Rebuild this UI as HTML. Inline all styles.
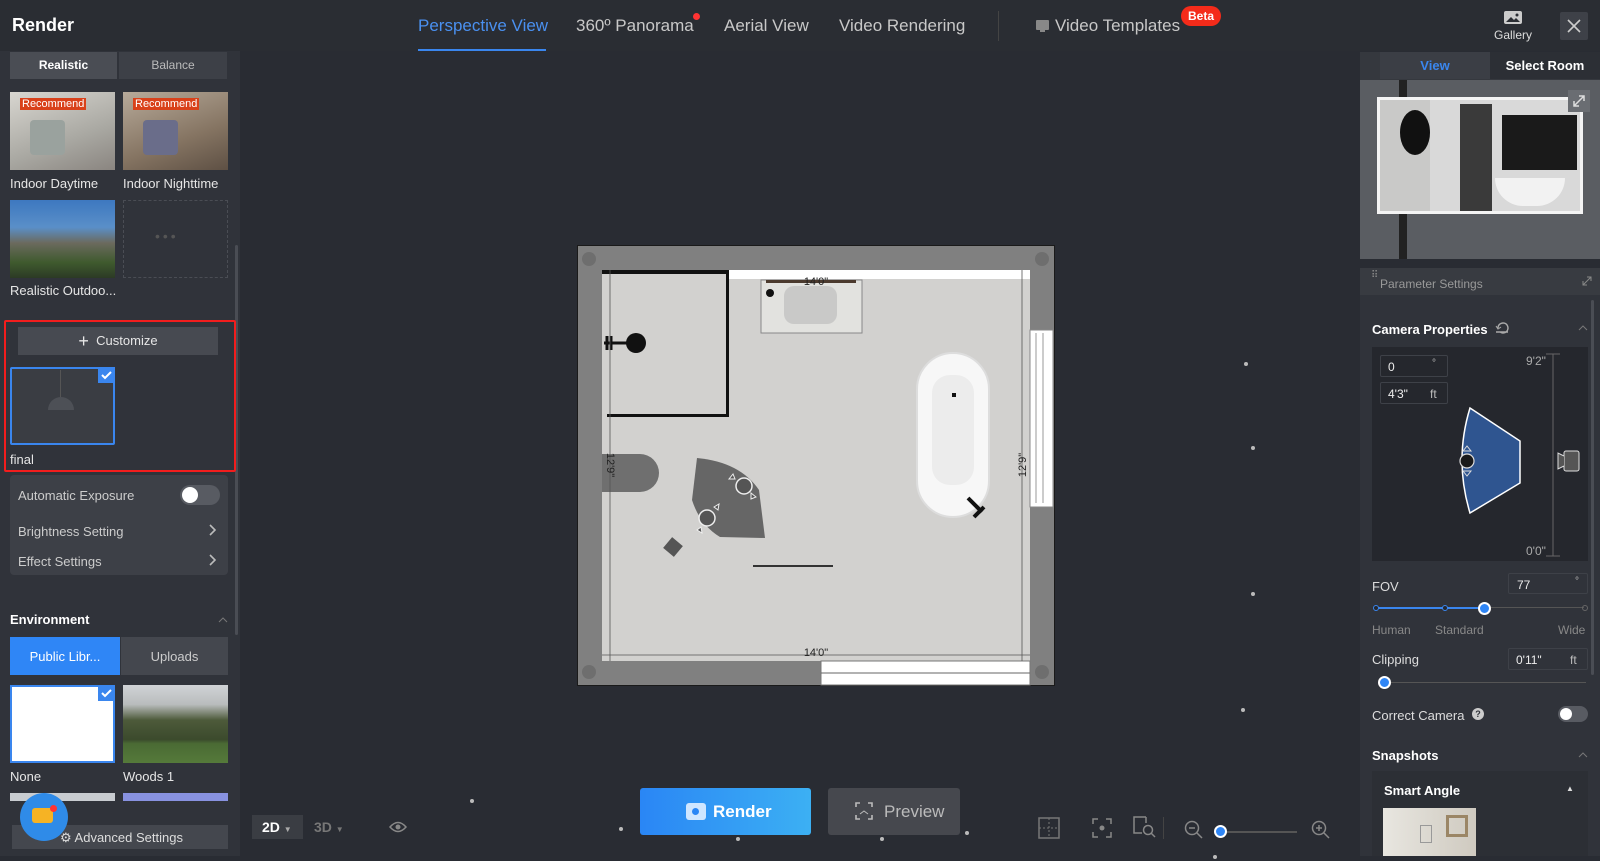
<!DOCTYPE html>
<html><head><meta charset="utf-8"><style>
*{box-sizing:border-box;margin:0;padding:0}
body{width:1600px;height:861px;overflow:hidden;background:#292c33;font-family:"Liberation Sans",sans-serif;color:#ddd;position:relative}
.a{position:absolute}
.t{position:absolute;white-space:nowrap}
.dot{position:absolute;width:4px;height:4px;border-radius:2px;background:#bbb}
</style></head><body>
<!-- top bar -->
<div class="a" style="left:0;top:0;width:1600px;height:51px;background:#2a2d33"></div>
<div class="t" style="left:12px;top:15px;font-size:18px;font-weight:bold;color:#fff">Render</div>
<div class="t" style="left:418px;top:16px;font-size:17px;color:#4a90f0">Perspective View</div>
<div class="a" style="left:418px;top:49px;width:128px;height:2px;background:#3a86ee"></div>
<div class="t" style="left:576px;top:16px;font-size:17px;color:#c8c8c8">360º Panorama</div>
<div class="a" style="left:693px;top:13px;width:7px;height:7px;border-radius:4px;background:#f33"></div>
<div class="t" style="left:724px;top:16px;font-size:17px;color:#c8c8c8">Aerial View</div>
<div class="t" style="left:839px;top:16px;font-size:17px;color:#c8c8c8">Video Rendering</div>
<div class="a" style="left:998px;top:11px;width:1px;height:30px;background:#444"></div>
<div class="a" style="left:1036px;top:20px;width:13px;height:10px;background:#888;border-radius:1px"></div>
<div class="a" style="left:1040px;top:30px;width:5px;height:2px;background:#888"></div>
<div class="t" style="left:1055px;top:16px;font-size:17px;color:#c8c8c8">Video Templates</div>
<div class="t" style="left:1181px;top:6px;width:40px;height:20px;border-radius:10px;background:#f42b1a;color:#fff;font-size:12px;font-weight:bold;text-align:center;line-height:20px">Beta</div>
<svg class="a" style="left:1503px;top:9px" width="20" height="16" viewBox="0 0 20 16"><rect x="1" y="2" width="18" height="13" rx="2" fill="#ccc"/><path d="M3 13l5-5 3 3 2-2 4 4z" fill="#2a2d33"/><circle cx="14" cy="6" r="1.5" fill="#2a2d33"/></svg>
<div class="t" style="left:1494px;top:28px;font-size:12px;color:#ddd">Gallery</div>
<div class="a" style="left:1560px;top:12px;width:28px;height:28px;background:#3e4148;border-radius:2px"></div>
<svg class="a" style="left:1566px;top:18px" width="16" height="16"><path d="M2 2L14 14M14 2L2 14" stroke="#ccc" stroke-width="1.6"/></svg>

<!-- left panel -->
<div class="a" style="left:0;top:51px;width:240px;height:805px;background:#30333a"></div>
<div class="a" style="left:10px;top:52px;width:107px;height:27px;background:#4a4d54"></div>
<div class="t" style="left:10px;top:58px;width:107px;text-align:center;font-size:12px;font-weight:bold;color:#fff">Realistic</div>
<div class="a" style="left:119px;top:52px;width:108px;height:27px;background:#3d4047"></div>
<div class="t" style="left:119px;top:58px;width:108px;text-align:center;font-size:12px;color:#bbb">Balance</div>
<div class="a" style="left:10px;top:92px;width:105px;height:78px;background:linear-gradient(160deg,#d8d6d0,#a9a8a2 60%,#8a8580)"></div>
<div class="a" style="left:30px;top:120px;width:35px;height:35px;background:#9aa29e;border-radius:4px"></div>
<div class="t" style="left:20px;top:98px;background:#d9411a;color:#fff;font-size:11px;padding:0 2px">Recommend</div>
<div class="a" style="left:123px;top:92px;width:105px;height:78px;background:linear-gradient(160deg,#b7aa9a,#857462 60%,#5e5044)"></div>
<div class="a" style="left:143px;top:120px;width:35px;height:35px;background:#6a6d8a;border-radius:4px"></div>
<div class="t" style="left:133px;top:98px;background:#d9411a;color:#fff;font-size:11px;padding:0 2px">Recommend</div>
<div class="t" style="left:10px;top:176px;font-size:13px;color:#e6e6e6">Indoor Daytime</div>
<div class="t" style="left:123px;top:176px;font-size:13px;color:#e6e6e6">Indoor Nighttime</div>
<div class="a" style="left:10px;top:200px;width:105px;height:78px;background:linear-gradient(180deg,#3d78c0 0%,#5a8fc8 35%,#6b6a5e 55%,#3f5a2e 80%,#2c3a25)"></div>
<div class="a" style="left:123px;top:200px;width:105px;height:78px;border:1px dashed #4a4d54"></div>
<div class="t" style="left:155px;top:228px;font-size:14px;color:#555;letter-spacing:3px">•••</div>
<div class="t" style="left:10px;top:283px;font-size:13px;color:#e6e6e6">Realistic Outdoo...</div>
<div class="a" style="left:235px;top:245px;width:3px;height:390px;background:#4a4d54;border-radius:2px"></div>
<div class="a" style="left:4px;top:320px;width:232px;height:152px;border:2px solid #f21d1d;border-radius:2px"></div>
<div class="a" style="left:18px;top:327px;width:200px;height:28px;background:#474a51"></div>
<div class="t" style="left:18px;top:333px;width:200px;text-align:center;font-size:13px;color:#e6e6e6"><span style="font-size:18px;line-height:12px;vertical-align:-2px">+</span>&nbsp; Customize</div>
<div class="a" style="left:10px;top:367px;width:105px;height:78px;background:#3a3d43;border:2px solid #3a86ee;border-radius:2px"></div>
<div class="a" style="left:60px;top:370px;width:1px;height:30px;background:#555"></div>
<div class="a" style="left:48px;top:397px;width:26px;height:13px;border-radius:13px 13px 0 0;background:#4d5056"></div>
<div class="a" style="left:98px;top:367px;width:17px;height:16px;background:#3a86ee"></div>
<svg class="a" style="left:100px;top:369px" width="13" height="12"><path d="M2 6l3 3 6-6" stroke="#fff" stroke-width="2" fill="none"/></svg>
<div class="t" style="left:10px;top:452px;font-size:13px;color:#e6e6e6">final</div>
<div class="a" style="left:10px;top:475px;width:218px;height:100px;background:#3d4047;border-radius:4px"></div>
<div class="t" style="left:18px;top:488px;font-size:13px;color:#ccc">Automatic Exposure</div>
<div class="a" style="left:180px;top:485px;width:40px;height:20px;border-radius:10px;background:#585b62"></div>
<div class="a" style="left:182px;top:487px;width:16px;height:16px;border-radius:8px;background:#fff"></div>
<div class="t" style="left:18px;top:524px;font-size:13px;color:#ccc">Brightness Setting</div>
<div class="t" style="left:18px;top:554px;font-size:13px;color:#ccc">Effect Settings</div>
<svg class="a" style="left:208px;top:524px" width="10" height="44"><path d="M2 1l5 5-5 5M2 31l5 5-5 5" stroke="#bbb" stroke-width="1.6" fill="none"/></svg>
<div class="t" style="left:10px;top:612px;font-size:13px;font-weight:bold;color:#fff">Environment</div>
<svg class="a" style="left:218px;top:617px" width="10" height="6"><path d="M1 5l4-4 4 4" stroke="#777" fill="none"/></svg>
<div class="a" style="left:10px;top:637px;width:110px;height:38px;background:#2f86f6"></div>
<div class="t" style="left:10px;top:649px;width:110px;text-align:center;font-size:13px;color:#fff">Public Libr...</div>
<div class="a" style="left:121px;top:637px;width:107px;height:38px;background:#44474e"></div>
<div class="t" style="left:121px;top:649px;width:107px;text-align:center;font-size:13px;color:#ccc">Uploads</div>
<div class="a" style="left:10px;top:685px;width:105px;height:78px;background:#fff;border:2px solid #3a86ee"></div>
<div class="a" style="left:98px;top:685px;width:17px;height:16px;background:#3a86ee"></div>
<svg class="a" style="left:100px;top:687px" width="13" height="12"><path d="M2 6l3 3 6-6" stroke="#fff" stroke-width="2" fill="none"/></svg>
<div class="a" style="left:123px;top:685px;width:105px;height:78px;background:linear-gradient(180deg,#d0d3d6 0%,#b9bcbd 25%,#4d5a3a 45%,#3b4a2c 70%,#4a6a34 75%,#557a3a)"></div>
<div class="t" style="left:10px;top:769px;font-size:13px;color:#e6e6e6">None</div>
<div class="t" style="left:123px;top:769px;font-size:13px;color:#e6e6e6">Woods 1</div>
<div class="a" style="left:10px;top:793px;width:105px;height:8px;background:#c8ccd0"></div>
<div class="a" style="left:123px;top:793px;width:105px;height:8px;background:#8892e0"></div>
<div class="a" style="left:12px;top:825px;width:216px;height:24px;background:#44474e"></div>
<div class="t" style="left:60px;top:830px;font-size:13px;color:#ddd">⚙ Advanced Settings</div>
<div class="a" style="left:20px;top:793px;width:48px;height:48px;border-radius:24px;background:#2f8be8"></div>
<div class="a" style="left:32px;top:808px;width:21px;height:15px;background:#f6b324;border-radius:3px"></div>
<div class="a" style="left:50px;top:805px;width:7px;height:7px;border-radius:4px;background:#f33"></div>

<!-- canvas bottom controls -->
<div class="a" style="left:252px;top:815px;width:51px;height:24px;background:#3a3d43"></div>
<div class="t" style="left:262px;top:819px;font-size:14px;font-weight:bold;color:#fff">2D <span style="font-size:8px;color:#aaa">▼</span></div>
<div class="t" style="left:314px;top:819px;font-size:14px;font-weight:bold;color:#777">3D <span style="font-size:8px">▼</span></div>
<svg class="a" style="left:389px;top:820px" width="18" height="14"><path d="M1 7Q9-2 17 7Q9 16 1 7z" fill="none" stroke="#888" stroke-width="1.5"/><circle cx="9" cy="7" r="2.5" fill="#888"/></svg>
<div class="a" style="left:640px;top:788px;width:171px;height:47px;border-radius:3px;background:linear-gradient(90deg,#2a86f5,#3cb0f3)"></div>
<div class="a" style="left:686px;top:803px;width:20px;height:17px;border-radius:3px;background:#cfe6ff"></div>
<div class="a" style="left:692px;top:808px;width:7px;height:7px;border-radius:4px;background:#2a86f5"></div>
<div class="t" style="left:713px;top:802px;font-size:17px;font-weight:bold;color:#fff">Render</div>
<div class="a" style="left:828px;top:788px;width:132px;height:47px;border-radius:3px;background:#46484e"></div>
<svg class="a" style="left:855px;top:802px" width="18" height="18"><path d="M1 5V1h4M13 1h4v4M17 13v4h-4M5 17H1v-4" stroke="#bbb" stroke-width="1.6" fill="none"/><path d="M5 12l4-3 4 3" stroke="#bbb" fill="none"/></svg>
<div class="t" style="left:884px;top:802px;font-size:17px;color:#bbb">Preview</div>
<svg class="a" style="left:1038px;top:817px" width="22" height="22"><rect x="1" y="1" width="20" height="20" fill="none" stroke="#777" stroke-width="1.5"/><path d="M11 1v20M1 11h20" stroke="#777" stroke-dasharray="2 2"/></svg>
<svg class="a" style="left:1092px;top:818px" width="20" height="20"><path d="M1 6V1h5M14 1h5v5M19 14v5h-5M6 19H1v-5" stroke="#888" stroke-width="1.5" fill="none"/><circle cx="10" cy="10" r="2.5" fill="#888"/></svg>
<svg class="a" style="left:1132px;top:815px" width="24" height="24"><path d="M14 2H2v16h8" stroke="#888" stroke-width="1.5" fill="none"/><path d="M14 2v6" stroke="#888" stroke-width="1.5"/><circle cx="16" cy="15" r="4.5" stroke="#888" stroke-width="1.5" fill="none"/><path d="M19 18l4 4" stroke="#888" stroke-width="1.5"/></svg>
<div class="a" style="left:1163px;top:817px;width:1px;height:22px;background:#444"></div>
<svg class="a" style="left:1184px;top:820px" width="20" height="20"><circle cx="8" cy="8" r="6.5" stroke="#888" stroke-width="1.5" fill="none"/><path d="M5 8h6M13 13l5 5" stroke="#888" stroke-width="1.5"/></svg>
<div class="a" style="left:1222px;top:831px;width:75px;height:2px;background:#555"></div>
<div class="a" style="left:1214px;top:825px;width:13px;height:13px;border-radius:7px;background:#2f86f6;border:2px solid #fff"></div>
<svg class="a" style="left:1311px;top:820px" width="20" height="20"><circle cx="8" cy="8" r="6.5" stroke="#888" stroke-width="1.5" fill="none"/><path d="M5 8h6M8 5v6M13 13l5 5" stroke="#888" stroke-width="1.5"/></svg>
<!-- scattered dots -->
<div class="dot" style="left:1244px;top:362px"></div><div class="dot" style="left:1251px;top:446px"></div><div class="dot" style="left:1251px;top:592px"></div><div class="dot" style="left:1241px;top:708px"></div><div class="dot" style="left:470px;top:799px"></div><div class="dot" style="left:619px;top:827px"></div><div class="dot" style="left:736px;top:837px"></div><div class="dot" style="left:880px;top:837px"></div><div class="dot" style="left:965px;top:831px"></div><div class="dot" style="left:1213px;top:855px"></div>

<!-- floor plan -->
<svg class="a" style="left:0;top:0" width="1600" height="861">
<rect x="577.5" y="245.5" width="477" height="440" fill="#808080" stroke="#1a1a1a"/>
<circle cx="589" cy="259" r="7" fill="#6e6e6e"/><circle cx="1042" cy="259" r="7" fill="#6e6e6e"/><circle cx="589" cy="672" r="7" fill="#6e6e6e"/><circle cx="1042" cy="672" r="7" fill="#6e6e6e"/>
<rect x="602" y="270" width="428" height="391" fill="#d2d1cf"/>
<rect x="728" y="270" width="302" height="9" fill="#fff"/>
<rect x="602" y="270" width="126" height="4" fill="#111"/>
<rect x="726" y="270" width="3" height="146" fill="#111"/>
<rect x="607" y="414" width="122" height="3" fill="#111"/>
<rect x="761" y="280" width="101" height="53" fill="#e2e2df" stroke="#888"/>
<rect x="766" y="280" width="90" height="3" fill="#4b3a2e"/>
<rect x="784" y="286" width="53" height="38" rx="10" fill="#c9c9c8"/>
<circle cx="770" cy="293" r="4" fill="#111"/>
<circle cx="636" cy="343" r="10" fill="#111"/>
<path d="M604 343h30M607 336v14M611 336v14" stroke="#111" stroke-width="3"/>
<rect x="1030" y="330" width="23" height="177" fill="#fff" stroke="#888"/>
<path d="M1036 333v170M1043 333v170" stroke="#999"/>
<rect x="821" y="661" width="209" height="24" fill="#fff" stroke="#777"/>
<path d="M821 673h209" stroke="#666"/>
<rect x="917" y="353" width="72" height="164" rx="36" fill="#f7f7f7" stroke="#ddd" stroke-width="2"/>
<rect x="932" y="375" width="42" height="110" rx="18" fill="#ececec"/>
<rect x="952" y="393" width="4" height="4" fill="#111"/>
<path d="M968 498l14 14M974 517l10-10" stroke="#111" stroke-width="4"/>
<path d="M602 454h38a19 19 0 0 1 0 38h-38z" fill="#6f6f6f"/>
<path d="M697 458Q740 462 759 490L765 538L720 537Q700 525 692 500z" fill="#666"/>
<circle cx="744" cy="486" r="8" fill="#555" stroke="#eee" stroke-width="1.5"/>
<circle cx="707" cy="518" r="8" fill="#555" stroke="#eee" stroke-width="1.5"/>
<path d="M733 474l-4 5 6 0zM756 497l-5-4 0 6zM714 507l5-3-1 6zM697 530l5 3-1-6z" fill="#555" stroke="#eee"/>
<rect x="666" y="540" width="14" height="14" fill="#555" transform="rotate(40 673 547)"/>
<path d="M753 566h80" stroke="#333" stroke-width="2"/>
<path d="M602 655h428M610 270v391M1022 270v391" stroke="#555" stroke-width="0.8"/>
<text x="816" y="285" font-size="11" fill="#222" text-anchor="middle" font-family="Liberation Sans">14'0"</text>
<text x="816" y="656" font-size="11" fill="#222" text-anchor="middle" font-family="Liberation Sans">14'0"</text>
<text x="0" y="0" font-size="11" fill="#222" text-anchor="middle" font-family="Liberation Sans" transform="translate(607 465) rotate(90)">12'9"</text>
<text x="0" y="0" font-size="11" fill="#222" text-anchor="middle" font-family="Liberation Sans" transform="translate(1026 465) rotate(-90)">12'9"</text>
</svg>

<!-- right panel -->
<div class="a" style="left:1360px;top:52px;width:240px;height:207px;background:#35383e"></div>
<div class="a" style="left:1380px;top:52px;width:110px;height:27px;background:#3b3e45"></div>
<div class="a" style="left:1490px;top:52px;width:110px;height:27px;background:#2c2f35"></div>
<div class="t" style="left:1380px;top:58px;width:110px;text-align:center;font-size:13px;font-weight:bold;color:#3a86ee">View</div>
<div class="t" style="left:1490px;top:58px;width:110px;text-align:center;font-size:13px;font-weight:bold;color:#fff">Select Room</div>
<div class="a" style="left:1360px;top:80px;width:240px;height:179px;background:#5a5d62"></div>
<div class="a" style="left:1399px;top:80px;width:8px;height:179px;background:#222"></div>
<div class="a" style="left:1377px;top:97px;width:206px;height:117px;background:#d9d9d9;border:3px solid #f4f4f4"></div>
<div class="a" style="left:1380px;top:100px;width:50px;height:111px;background:#c9c9c8"></div>
<div class="a" style="left:1400px;top:110px;width:30px;height:45px;border-radius:50%;background:#111"></div>
<div class="a" style="left:1460px;top:104px;width:32px;height:107px;background:#3a3a3a"></div>
<div class="a" style="left:1502px;top:115px;width:75px;height:55px;background:#1a1a1a"></div>
<div class="a" style="left:1495px;top:178px;width:70px;height:28px;border-radius:0 0 30px 30px;background:#f2f2f2"></div>
<div class="a" style="left:1568px;top:90px;width:22px;height:22px;background:#6a6d72"></div>
<svg class="a" style="left:1571px;top:93px" width="16" height="16"><path d="M3 13L13 3M8 3h5v5M3 8v5h5" stroke="#ddd" stroke-width="1.5" fill="none"/></svg>
<div class="a" style="left:1360px;top:268px;width:240px;height:588px;background:#30333a"></div>
<div class="a" style="left:1360px;top:268px;width:240px;height:27px;background:#383b41"></div>
<div class="t" style="left:1380px;top:277px;font-size:12px;color:#999">Parameter Settings</div>
<div class="t" style="left:1371px;top:274px;font-size:10px;color:#888;line-height:4px">⠿</div>
<svg class="a" style="left:1582px;top:276px" width="10" height="10"><path d="M1 9l8-8M5 1h4v4M1 5v4h4" stroke="#888" fill="none"/></svg>
<div class="a" style="left:1591px;top:300px;width:3px;height:375px;background:#4a4d54;border-radius:2px"></div>
<div class="t" style="left:1372px;top:322px;font-size:13px;font-weight:bold;color:#fff">Camera Properties</div>
<svg class="a" style="left:1495px;top:321px" width="16" height="14"><path d="M3 7a5 5 0 1 1 2 4M1 11h12" stroke="#aaa" stroke-width="1.4" fill="none"/><path d="M1 5l2 3 3-2" stroke="#aaa" fill="none"/></svg>
<svg class="a" style="left:1578px;top:325px" width="10" height="6"><path d="M1 5l4-4 4 4" stroke="#777" fill="none"/></svg>
<div class="a" style="left:1372px;top:347px;width:216px;height:214px;background:#25272d"></div>
<div class="a" style="left:1380px;top:355px;width:68px;height:22px;border:1px solid #3e4148;border-radius:2px"></div>
<div class="t" style="left:1388px;top:360px;font-size:12px;color:#eee">0</div>
<div class="t" style="left:1432px;top:358px;font-size:10px;color:#bbb">°</div>
<div class="a" style="left:1380px;top:382px;width:68px;height:22px;border:1px solid #3e4148;border-radius:2px"></div>
<div class="t" style="left:1388px;top:387px;font-size:12px;color:#eee">4'3"</div>
<div class="t" style="left:1430px;top:387px;font-size:12px;color:#bbb">ft</div>
<div class="t" style="left:1526px;top:354px;font-size:12px;color:#aaa">9'2"</div>
<div class="t" style="left:1526px;top:544px;font-size:12px;color:#aaa">0'0"</div>
<svg class="a" style="left:1372px;top:347px" width="216" height="214"><path d="M174 7h14M181 7v202M174 209h14" stroke="#666"/><path d="M98 61L148 94V136L98 166Q82 113 98 61z" fill="#2f5590" stroke="#fff" stroke-width="1.5"/><circle cx="95" cy="114" r="7" fill="#1a1a1a" stroke="#ddd" stroke-width="1.2"/><path d="M91 104l4-5 4 5zM91 124l4 5 4-5z" fill="none" stroke="#ddd"/><rect x="192" y="104" width="15" height="20" rx="2" fill="#555" stroke="#ddd"/><path d="M192 109l-6-3v16l6-3" fill="#555" stroke="#ddd"/></svg>
<div class="t" style="left:1372px;top:579px;font-size:13px;color:#ddd">FOV</div>
<div class="a" style="left:1508px;top:573px;width:80px;height:21px;border:1px solid #3e4148;border-radius:2px"></div>
<div class="t" style="left:1517px;top:578px;font-size:12px;color:#eee">77</div>
<div class="t" style="left:1575px;top:576px;font-size:10px;color:#bbb">°</div>
<div class="a" style="left:1376px;top:607px;width:108px;height:2px;background:#3a86ee"></div>
<div class="a" style="left:1484px;top:607px;width:100px;height:1px;background:#555"></div>
<div class="a" style="left:1373px;top:605px;width:6px;height:6px;border-radius:3px;border:1.5px solid #3a86ee;background:#25272d"></div>
<div class="a" style="left:1442px;top:605px;width:6px;height:6px;border-radius:3px;border:1.5px solid #3a86ee;background:#25272d"></div>
<div class="a" style="left:1478px;top:602px;width:13px;height:13px;border-radius:7px;background:#2f86f6;border:2px solid #fff"></div>
<div class="a" style="left:1582px;top:605px;width:6px;height:6px;border-radius:3px;border:1px solid #666"></div>
<div class="t" style="left:1372px;top:623px;font-size:12px;color:#888">Human</div>
<div class="t" style="left:1435px;top:623px;font-size:12px;color:#888">Standard</div>
<div class="t" style="left:1558px;top:623px;font-size:12px;color:#888">Wide</div>
<div class="t" style="left:1372px;top:652px;font-size:13px;color:#ddd">Clipping</div>
<div class="a" style="left:1508px;top:648px;width:80px;height:22px;border:1px solid #3e4148;border-radius:2px"></div>
<div class="t" style="left:1516px;top:653px;font-size:12px;color:#eee">0'11"</div>
<div class="t" style="left:1570px;top:653px;font-size:12px;color:#bbb">ft</div>
<div class="a" style="left:1380px;top:682px;width:206px;height:1px;background:#555"></div>
<div class="a" style="left:1378px;top:676px;width:13px;height:13px;border-radius:7px;background:#2f86f6;border:2px solid #fff"></div>
<div class="t" style="left:1372px;top:708px;font-size:13px;color:#ddd">Correct Camera</div>
<div class="a" style="left:1472px;top:708px;width:12px;height:12px;border-radius:6px;background:#ccc;color:#30333a;font-size:9px;font-weight:bold;text-align:center;line-height:12px">?</div>
<div class="a" style="left:1558px;top:706px;width:30px;height:16px;border-radius:8px;background:#585b62"></div>
<div class="a" style="left:1560px;top:708px;width:12px;height:12px;border-radius:6px;background:#fff"></div>
<div class="t" style="left:1372px;top:748px;font-size:13px;font-weight:bold;color:#fff">Snapshots</div>
<svg class="a" style="left:1578px;top:752px" width="10" height="6"><path d="M1 5l4-4 4 4" stroke="#777" fill="none"/></svg>
<div class="a" style="left:1372px;top:771px;width:216px;height:85px;background:#2c2f35"></div>
<div class="t" style="left:1384px;top:783px;font-size:13px;font-weight:bold;color:#fff">Smart Angle</div>
<div class="t" style="left:1566px;top:784px;font-size:8px;color:#ddd">▲</div>
<div class="a" style="left:1383px;top:808px;width:93px;height:48px;background:linear-gradient(90deg,#e8e6e0,#cfcac0)"></div>
<div class="a" style="left:1420px;top:825px;width:12px;height:18px;border:1px solid #999"></div>
<div class="a" style="left:1446px;top:815px;width:22px;height:22px;border:3px solid #9b8666"></div>
</body></html>
